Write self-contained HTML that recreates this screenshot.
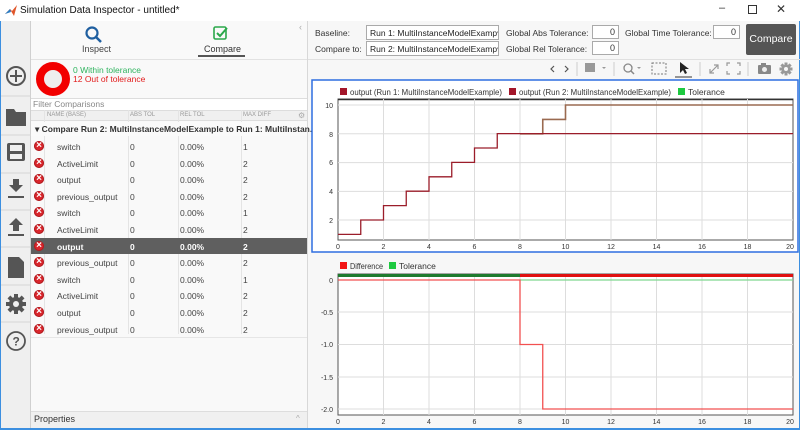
<!DOCTYPE html>
<html><head><meta charset="utf-8"><style>
*{margin:0;padding:0;box-sizing:border-box}
body{width:800px;height:430px;overflow:hidden;background:#f7f7f7;font-family:"Liberation Sans",sans-serif;font-size:9px;color:#333;position:relative}
.a{position:absolute}
.t{position:absolute;white-space:nowrap}
.sel{position:absolute;height:15px;border:1px solid #aaa;background:#fff;font-size:8.5px;padding:2px 3px;color:#222;white-space:nowrap;overflow:hidden}
.inp{position:absolute;height:14px;border:1px solid #aaa;background:#fff;font-size:9px;text-align:right;padding:1px 3px}
.row{position:absolute;left:31px;width:276px;height:16.6px;font-size:8.5px;color:#444}
.row span{position:absolute;top:4px}
.ic{position:absolute;display:block;left:3px;top:3px;width:10px;height:10px;border-radius:50%;background:#d9262c;box-shadow:inset 0 0 0 1px #b01c20;overflow:hidden}
.ic:after{content:"×";position:absolute;left:0;top:0;width:10px;height:10px;line-height:10px;text-align:center;color:#fff;font-size:10px;font-weight:bold;font-style:normal}
</style></head><body>
<div class="a" style="left:0;top:0;width:800px;height:21px;background:#fff"></div>
<svg class="a" style="left:5px;top:5px" width="12" height="11"><path d="M0 9 L5 4 L7 6 L12 0 L9 11 L6 6 Z" fill="#e0562a"/><path d="M0 9 L5 4 L6 7Z" fill="#2a7dc4"/></svg>
<div class="t" style="left:20px;top:5px;font-size:10px;color:#111">Simulation Data Inspector - untitled*</div>
<div class="t" style="left:719px;top:2px;font-size:11px">–</div>
<div class="a" style="left:748px;top:5px;width:9px;height:9px;border:1px solid #333"></div>
<div class="t" style="left:776px;top:2px;font-size:12px">✕</div>
<div class="a" style="left:0;top:21px;width:1px;height:409px;background:#3c8fe0"></div>
<div class="a" style="left:799px;top:21px;width:1px;height:409px;background:#3c8fe0"></div>
<div class="a" style="left:0;top:428px;width:800px;height:2px;background:#3c8fe0"></div>
<div class="a" style="left:1px;top:21px;width:30px;height:407px;background:#efefef;border-right:1px solid #d0d0d0"></div>
<svg class="a" style="left:1px;top:21px" width="30" height="407">
<g stroke="#d4d4d4"><line x1="0" y1="75" x2="30" y2="75"/><line x1="0" y1="114" x2="30" y2="114"/><line x1="0" y1="152" x2="30" y2="152"/><line x1="0" y1="189" x2="30" y2="189"/><line x1="0" y1="226" x2="30" y2="226"/><line x1="0" y1="264" x2="30" y2="264"/><line x1="0" y1="301" x2="30" y2="301"/></g>
<circle cx="15" cy="55" r="9" fill="none" stroke="#555" stroke-width="2"/><path d="M15 49v12M9 55h12" stroke="#555" stroke-width="2"/>
<path d="M5 88h8l2 3h10v14H5z" fill="#555"/>
<rect x="6" y="122" width="18" height="18" rx="2" fill="#555"/><rect x="9" y="124" width="12" height="6" fill="#efefef"/><rect x="9" y="133" width="12" height="5" fill="#efefef"/>
<path d="M12 158h6v6h4l-7 7-7-7h4z" fill="#555"/><rect x="7" y="175" width="16" height="2" fill="#555"/>
<path d="M15 197l7 7h-4v6h-6v-6h-4z" fill="#555"/><rect x="7" y="213" width="16" height="2" fill="#555"/>
<path d="M7 236h11l5 5v16H7z" fill="#555"/>
<g transform="translate(15 283)" fill="#555"><rect x="-2" y="-10" width="4" height="20"/><rect x="-2" y="-10" width="4" height="20" transform="rotate(45)"/><rect x="-2" y="-10" width="4" height="20" transform="rotate(90)"/><rect x="-2" y="-10" width="4" height="20" transform="rotate(135)"/><circle r="7"/><circle r="3" fill="#efefef"/></g>
<circle cx="15" cy="320" r="9" fill="none" stroke="#555" stroke-width="1.8"/><text x="11.5" y="324.5" font-size="12" font-weight="bold" fill="#555" font-family="Liberation Sans">?</text>
</svg>
<div class="a" style="left:31px;top:21px;width:276px;height:407px;background:#f9f9f9"></div>
<svg class="a" style="left:84px;top:25px" width="20" height="20"><circle cx="8" cy="8" r="5.5" fill="none" stroke="#1f5fa0" stroke-width="2.2"/><path d="M12 12l5 5" stroke="#1f5fa0" stroke-width="2.5"/></svg>
<div class="t" style="left:82px;top:44px;font-size:9px;color:#444">Inspect</div>
<svg class="a" style="left:213px;top:25px" width="16" height="16"><rect x="1" y="2" width="12" height="12" rx="1.5" fill="none" stroke="#2aa84a" stroke-width="1.6"/><path d="M4 8l3 3 7-8" fill="none" stroke="#2aa84a" stroke-width="2"/></svg>
<div class="t" style="left:204px;top:44px;font-size:9px;color:#333">Compare</div>
<div class="a" style="left:198px;top:55px;width:47px;height:2px;background:#555"></div>
<div class="t" style="left:299px;top:22px;font-size:9px;color:#aaa">‹</div>
<div class="a" style="left:31px;top:59px;width:276px;height:1px;background:#e2e2e2"></div>
<div class="a" style="left:36px;top:62px;width:34px;height:34px;border-radius:50%;border:8px solid #f20000;background:#eee"></div>
<div class="t" style="left:73px;top:65px;font-size:8.5px;color:#2db35d">0 Within tolerance</div>
<div class="t" style="left:73px;top:74px;font-size:8.5px;color:#e21c1c">12 Out of tolerance</div>
<div class="a" style="left:31px;top:98px;width:276px;height:12px;background:#fff;border-top:1px solid #ddd"></div>
<div class="t" style="left:33px;top:99px;font-size:8.5px;color:#888">Filter Comparisons</div>
<div class="a" style="left:31px;top:110px;width:276px;height:11px;background:#f0f0f0;border-top:1px solid #ddd;border-bottom:1px solid #ddd"></div>
<div class="a" style="left:44px;top:110px;width:1px;height:224px;background:#e4e4e4"></div>
<div class="a" style="left:128px;top:110px;width:1px;height:224px;background:#e4e4e4"></div>
<div class="a" style="left:178px;top:110px;width:1px;height:224px;background:#e4e4e4"></div>
<div class="a" style="left:241px;top:110px;width:1px;height:224px;background:#e4e4e4"></div>
<div class="a" style="left:307px;top:21px;width:1px;height:407px;background:#d8d8d8"></div>
<div class="t" style="left:47px;top:112px;font-size:6px;color:#999">NAME (BASE)</div>
<div class="t" style="left:130px;top:112px;font-size:6px;color:#999">ABS TOL</div>
<div class="t" style="left:180px;top:112px;font-size:6px;color:#999">REL TOL</div>
<div class="t" style="left:243px;top:112px;font-size:6px;color:#999">MAX DIFF</div>
<div class="t" style="left:298px;top:111px;font-size:8px;color:#aaa">⚙</div>
<div class="a" style="left:31px;top:122px;width:276px;height:14px;background:#fafafa"></div>
<div class="t" style="left:35px;top:124px;font-size:8.5px;font-weight:bold;color:#333">▾ Compare Run 2: MultiInstanceModelExample to Run 1: MultiInstan...</div>

<div class="row" style="top:138px"><i class="ic"></i><span style="left:26px">switch</span><span style="left:99px">0</span><span style="left:149px">0.00%</span><span style="left:212px">1</span></div>
<div class="row" style="top:154.6px"><i class="ic"></i><span style="left:26px">ActiveLimit</span><span style="left:99px">0</span><span style="left:149px">0.00%</span><span style="left:212px">2</span></div>
<div class="row" style="top:171.2px"><i class="ic"></i><span style="left:26px">output</span><span style="left:99px">0</span><span style="left:149px">0.00%</span><span style="left:212px">2</span></div>
<div class="row" style="top:187.8px"><i class="ic"></i><span style="left:26px">previous_output</span><span style="left:99px">0</span><span style="left:149px">0.00%</span><span style="left:212px">2</span></div>
<div class="row" style="top:204.4px"><i class="ic"></i><span style="left:26px">switch</span><span style="left:99px">0</span><span style="left:149px">0.00%</span><span style="left:212px">1</span></div>
<div class="row" style="top:221px"><i class="ic"></i><span style="left:26px">ActiveLimit</span><span style="left:99px">0</span><span style="left:149px">0.00%</span><span style="left:212px">2</span></div>
<div class="row" style="top:237.6px;background:#5f5f5f;color:#fff;font-weight:bold"><i class="ic"></i><span style="left:26px">output</span><span style="left:99px">0</span><span style="left:149px">0.00%</span><span style="left:212px">2</span></div>
<div class="row" style="top:254.2px"><i class="ic"></i><span style="left:26px">previous_output</span><span style="left:99px">0</span><span style="left:149px">0.00%</span><span style="left:212px">2</span></div>
<div class="row" style="top:270.8px"><i class="ic"></i><span style="left:26px">switch</span><span style="left:99px">0</span><span style="left:149px">0.00%</span><span style="left:212px">1</span></div>
<div class="row" style="top:287.4px"><i class="ic"></i><span style="left:26px">ActiveLimit</span><span style="left:99px">0</span><span style="left:149px">0.00%</span><span style="left:212px">2</span></div>
<div class="row" style="top:304px"><i class="ic"></i><span style="left:26px">output</span><span style="left:99px">0</span><span style="left:149px">0.00%</span><span style="left:212px">2</span></div>
<div class="row" style="top:320.6px"><i class="ic"></i><span style="left:26px">previous_output</span><span style="left:99px">0</span><span style="left:149px">0.00%</span><span style="left:212px">2</span></div>
<div class="a" style="left:31px;top:337px;width:276px;height:1px;background:#e6e6e6"></div>
<div class="a" style="left:31px;top:411px;width:276px;height:17px;background:#f0f0f0;border-top:1px solid #ddd"></div>
<div class="t" style="left:34px;top:414px;font-size:9px;color:#333">Properties</div>
<div class="t" style="left:296px;top:414px;font-size:8px;color:#aaa">^</div>

<div class="t" style="left:315px;top:28px;font-size:8.5px">Baseline:</div>
<div class="t" style="left:315px;top:44px;font-size:8.5px">Compare to:</div>
<div class="sel" style="left:366px;top:25px;width:133px">Run 1: MultiInstanceModelExamp▾</div>
<div class="sel" style="left:366px;top:41px;width:133px">Run 2: MultiInstanceModelExamp▾</div>
<div class="t" style="left:506px;top:28px;font-size:8.5px">Global Abs Tolerance:</div>
<div class="t" style="left:506px;top:44px;font-size:8.5px">Global Rel Tolerance:</div>
<div class="inp" style="left:592px;top:25px;width:27px">0</div>
<div class="inp" style="left:592px;top:41px;width:27px">0</div>
<div class="t" style="left:625px;top:28px;font-size:8.5px">Global Time Tolerance:</div>
<div class="inp" style="left:713px;top:25px;width:27px">0</div>
<div class="a" style="left:746px;top:24px;width:50px;height:31px;background:#555;border-radius:2px;color:#fff;font-size:10.5px;text-align:center;line-height:31px">Compare</div>
<div class="a" style="left:308px;top:59px;width:492px;height:1px;background:#e0e0e0"></div>
<svg class="a" style="left:540px;top:58px" width="260" height="22" font-family="Liberation Sans">
<g fill="none" stroke="#555" stroke-width="1.2"><path d="M14 8l-3 3 3 3M25 8l3 3-3 3"/></g>
<g stroke="#ccc"><line x1="37" y1="4" x2="37" y2="18"/><line x1="74" y1="4" x2="74" y2="18"/><line x1="160" y1="4" x2="160" y2="18"/><line x1="208" y1="4" x2="208" y2="18"/></g>
<rect x="45" y="5" width="10" height="9" fill="#999"/><path d="M62 9l2 2 2-2" fill="#999"/>
<circle cx="88" cy="10" r="4" fill="none" stroke="#888" stroke-width="1.3"/><path d="M91 13l3 3" stroke="#888" stroke-width="1.5"/><path d="M97 9l2 2 2-2" fill="#999"/>
<rect x="112" y="5" width="14" height="11" fill="none" stroke="#777" stroke-dasharray="2 1.5"/>
<path d="M140 4v11l3-3 2 4 2-1-2-4h4z" fill="#222"/><line x1="135" y1="19" x2="152" y2="19" stroke="#333"/>
<path d="M170 15l8-8M174 7h4v4M170 11v4h4" fill="none" stroke="#999" stroke-width="1.2"/>
<path d="M187 8v-3h3M197 5h3v3M200 13v3h-3M190 16h-3v-3" fill="none" stroke="#999" stroke-width="1.2"/>
<rect x="218" y="7" width="13" height="9" rx="1" fill="#888"/><circle cx="224.5" cy="11.5" r="2.5" fill="#eee"/><rect x="221" y="5" width="5" height="3" fill="#888"/>
<g transform="translate(246 11)" fill="#999"><rect x="-1.5" y="-6.5" width="3" height="13"/><rect x="-1.5" y="-6.5" width="3" height="13" transform="rotate(45)"/><rect x="-1.5" y="-6.5" width="3" height="13" transform="rotate(90)"/><rect x="-1.5" y="-6.5" width="3" height="13" transform="rotate(135)"/><circle r="4.5"/><circle r="2" fill="#f7f7f7"/></g>
</svg>
<svg class="a" style="left:308px;top:78px" width="492" height="350" font-family="Liberation Sans">
<rect x="4" y="2" width="486" height="172" fill="#fff" stroke="#2f6ee0" stroke-width="1.5"/>
<g transform="translate(-308,-78)">
<rect x="340" y="88" width="7" height="7" fill="#a3162a"/><text x="350" y="95" font-size="8.5" fill="#333" textLength="152" lengthAdjust="spacingAndGlyphs">output (Run 1: MultiInstanceModelExample)</text>
<rect x="509" y="88" width="7" height="7" fill="#a3162a"/><text x="519" y="95" font-size="8.5" fill="#333" textLength="152" lengthAdjust="spacingAndGlyphs">output (Run 2: MultiInstanceModelExample)</text>
<rect x="678" y="88" width="7" height="7" fill="#1ec940"/><text x="688" y="95" font-size="8.5" fill="#333">Tolerance</text>
<rect x="338" y="99" width="455" height="141" fill="#fff" stroke="#555" stroke-width="1"/>
<line x1="338" y1="99.5" x2="793" y2="99.5" stroke="#333" stroke-width="1.5"/>
<g stroke="#ddd"><line x1="383.5" y1="99" x2="383.5" y2="240"/><line x1="429" y1="99" x2="429" y2="240"/><line x1="474.5" y1="99" x2="474.5" y2="240"/><line x1="520" y1="99" x2="520" y2="240"/><line x1="565.5" y1="99" x2="565.5" y2="240"/><line x1="611" y1="99" x2="611" y2="240"/><line x1="656.5" y1="99" x2="656.5" y2="240"/><line x1="702" y1="99" x2="702" y2="240"/><line x1="747.5" y1="99" x2="747.5" y2="240"/>
<line x1="338" y1="220" x2="793" y2="220"/><line x1="338" y1="191.4" x2="793" y2="191.4"/><line x1="338" y1="162.6" x2="793" y2="162.6"/><line x1="338" y1="133.8" x2="793" y2="133.8"/><line x1="338" y1="105" x2="793" y2="105"/></g>
<g font-size="7" fill="#333" text-anchor="end"><text x="333" y="223">2</text><text x="333" y="194">4</text><text x="333" y="165">6</text><text x="333" y="137">8</text><text x="333" y="108">10</text></g>
<g font-size="7" fill="#333" text-anchor="middle"><text x="338" y="249">0</text><text x="383.5" y="249">2</text><text x="429" y="249">4</text><text x="474.5" y="249">6</text><text x="520" y="249">8</text><text x="565.5" y="249">10</text><text x="611" y="249">12</text><text x="656.5" y="249">14</text><text x="702" y="249">16</text><text x="747.5" y="249">18</text><text x="790" y="249">20</text></g>
<path d="M520 133.8H542.75V119.4H565.5V105H793" fill="none" stroke="#9a6a50" stroke-width="1.6"/>
<path d="M338 234.4H360.75V220H383.5V205.6H406.25V191.2H429V176.8H451.75V162.4H474.5V148H497.25V133.6H793" fill="none" stroke="#9b1d2a" stroke-width="1.3"/>
<rect x="340" y="262" width="7" height="7" fill="#f21414"/><text x="350" y="269" font-size="8.5" fill="#333" textLength="33" lengthAdjust="spacingAndGlyphs">Difference</text>
<rect x="389" y="262" width="7" height="7" fill="#1ec940"/><text x="399" y="269" font-size="8.5" fill="#333">Tolerance</text>
<rect x="338" y="274" width="455" height="141" fill="#fff" stroke="#555" stroke-width="1"/>
<g stroke="#ddd"><line x1="383.5" y1="274" x2="383.5" y2="415"/><line x1="429" y1="274" x2="429" y2="415"/><line x1="474.5" y1="274" x2="474.5" y2="415"/><line x1="520" y1="274" x2="520" y2="415"/><line x1="565.5" y1="274" x2="565.5" y2="415"/><line x1="611" y1="274" x2="611" y2="415"/><line x1="656.5" y1="274" x2="656.5" y2="415"/><line x1="702" y1="274" x2="702" y2="415"/><line x1="747.5" y1="274" x2="747.5" y2="415"/>
<line x1="338" y1="312" x2="793" y2="312"/><line x1="338" y1="344.5" x2="793" y2="344.5"/><line x1="338" y1="377" x2="793" y2="377"/><line x1="338" y1="409" x2="793" y2="409"/></g>
<rect x="338" y="274" width="182" height="3" fill="#1f7a2e"/><rect x="520" y="274" width="273" height="3" fill="#e01010"/>
<line x1="520" y1="280" x2="793" y2="280" stroke="#7fd88f" stroke-width="1.2"/>
<path d="M338 280H520V344.5H542.75V409H793" fill="none" stroke="#f25050" stroke-width="1.3"/>
<g font-size="7" fill="#333" text-anchor="end"><text x="333" y="283">0</text><text x="333" y="315">-0.5</text><text x="333" y="347">-1.0</text><text x="333" y="380">-1.5</text><text x="333" y="412">-2.0</text></g>
<g font-size="7" fill="#333" text-anchor="middle"><text x="338" y="424">0</text><text x="383.5" y="424">2</text><text x="429" y="424">4</text><text x="474.5" y="424">6</text><text x="520" y="424">8</text><text x="565.5" y="424">10</text><text x="611" y="424">12</text><text x="656.5" y="424">14</text><text x="702" y="424">16</text><text x="747.5" y="424">18</text><text x="790" y="424">20</text></g>
</g>
</svg>
</body></html>
